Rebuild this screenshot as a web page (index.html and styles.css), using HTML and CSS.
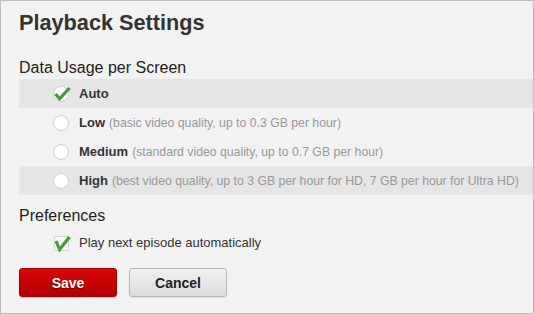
FILE: index.html
```html
<!DOCTYPE html>
<html lang="en">
    <head>
        <meta charset="UTF-8" />
        <title>Playback Settings</title>
        <link rel="stylesheet" href="styles.css">
    </head>
    <body>
        <div id="panel">
            <h1 class="title">Playback Settings</h1>

            <h2 class="section">Data Usage per Screen</h2>
            <div class="options">
                <label class="option shaded">
                    <span class="radio">
                        <svg class="check" viewBox="0 0 18 16" width="18" height="16"><path d="M2.5 8 L6.5 12.8 L16.5 2" /></svg>
                    </span>
                    <span class="name">Auto</span>
                </label>
                <label class="option">
                    <span class="radio"></span>
                    <span class="name">Low</span>
                    <span class="desc">(basic video quality, up to 0.3 GB per hour)</span>
                </label>
                <label class="option">
                    <span class="radio"></span>
                    <span class="name">Medium</span>
                    <span class="desc">(standard video quality, up to 0.7 GB per hour)</span>
                </label>
                <label class="option shaded">
                    <span class="radio"></span>
                    <span class="name">High</span>
                    <span class="desc">(best video quality, up to 3 GB per hour for HD, 7 GB per hour for Ultra HD)</span>
                </label>
            </div>

            <h2 class="section prefs">Preferences</h2>
            <label class="pref">
                <span class="box">
                    <svg class="check" viewBox="0 0 18 16" width="18" height="16"><path d="M2 5 L5.6 13.5 L15.5 1" /></svg>
                </span>
                <span>Play next episode automatically</span>
            </label>

            <div class="buttons">
                <button class="btn save" type="button">Save</button>
                <button class="btn cancel" type="button">Cancel</button>
            </div>
        </div>
    </body>
</html>
```

FILE: styles.css
```css
html, body {
    margin: 0;
    padding: 0;
}

#panel {
    box-sizing: border-box;
    width: 534px;
    height: 314px;
    border: 1px solid #bcbcbc;
    background-color: #f2f2f2;
    padding: 9px 0 0 18px;
    font-family: 'Liberation Sans', Arial, sans-serif;
    color: #333;
}

    .title {
        margin: 0;
        font-size: 21.7px;
        line-height: 26px;
        font-weight: bold;
        color: #333;
    }

    .section {
        margin: 22px 0 1px 0;
        font-size: 16px;
        line-height: 20px;
        font-weight: normal;
        color: #222;
    }
    .section.prefs {
        margin-top: 11px;
    }

    .option {
        display: flex;
        align-items: center;
        height: 29px;
        padding-left: 34px;
        font-size: 13px;
    }
    .option.shaded {
        background-color: #e5e5e5;
    }
    .option .name {
        font-weight: bold;
        margin-left: 10px;
        color: #333;
    }
    .option .desc {
        font-size: 12.25px;
        color: #999;
        margin-left: 4px;
    }

    .radio {
        position: relative;
        box-sizing: border-box;
        width: 16px;
        height: 16px;
        border-radius: 50%;
        border: 1px solid #cfcfcf;
        background-color: #fff;
        flex-shrink: 0;
    }
    .radio .check {
        position: absolute;
        left: -1px;
        top: -1px;
    }

    .check {
        overflow: visible;
    }
    .check path {
        fill: none;
        stroke: #3f9e35;
        stroke-width: 3.2;
        stroke-linecap: butt;
        stroke-linejoin: miter;
    }

    .pref {
        display: flex;
        align-items: center;
        height: 20px;
        margin-top: 6px;
        padding-left: 35px;
        font-size: 13px;
        color: #333;
    }
    .pref .box {
        position: relative;
        box-sizing: border-box;
        width: 15px;
        height: 15px;
        margin-top: 2px;
        margin-right: 10px;
        border: 1px solid #d4d4d4;
        background-color: #f7f7f7;
    }
    .pref .box .check {
        position: absolute;
        left: -1px;
        top: -1px;
    }

    .buttons {
        display: flex;
        gap: 12px;
        margin-top: 16px;
    }

    .btn {
        box-sizing: border-box;
        width: 98px;
        height: 29px;
        border-radius: 3px;
        font-family: 'Liberation Sans', Arial, sans-serif;
        font-size: 14px;
        font-weight: bold;
        padding: 0;
        cursor: pointer;
    }
    .btn.save {
        color: #fff;
        border: 1px solid #9e0000;
        background: linear-gradient(#da0606, #b00000);
        text-shadow: 0 1px 1px rgba(0,0,0,0.4);
        box-shadow: 0 1px 1px rgba(0,0,0,0.15);
    }
    .btn.cancel {
        color: #222;
        border: 1px solid #b5b5b5;
        background: linear-gradient(#f1f1f1, #dcdcdc);
        box-shadow: 0 1px 1px rgba(0,0,0,0.08);
    }
```
